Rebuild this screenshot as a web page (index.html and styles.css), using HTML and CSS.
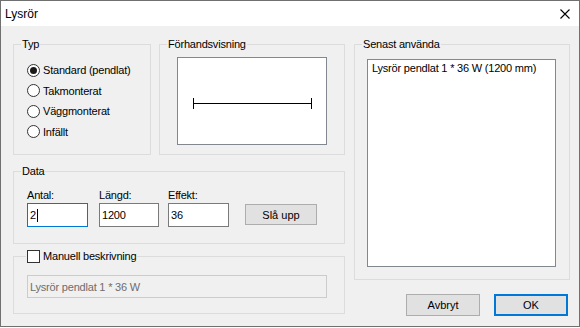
FILE: index.html
```html
<!DOCTYPE html>
<html lang="sv">
<head>
<meta charset="utf-8" />
<title>Lysrör</title>
<link rel="stylesheet" href="styles.css">
</head>
<body>
<div class="window">
  <div class="titlebar">
    <span class="title">Lysrör</span>
    <svg class="close" width="10" height="10" viewBox="0 0 10 10">
      <path d="M0.5 0.5 L9.5 9.5 M9.5 0.5 L0.5 9.5" stroke="#000" stroke-width="1.1" fill="none"/>
    </svg>
  </div>
  <div class="content">
    <div class="left">
      <div class="top-row">
        <fieldset class="group typ">
          <legend>Typ</legend>
          <div class="group-body">
            <div class="radio checked"><span class="circle"></span>Standard (pendlat)</div>
            <div class="radio"><span class="circle"></span>Takmonterat</div>
            <div class="radio"><span class="circle"></span>Väggmonterat</div>
            <div class="radio"><span class="circle"></span>Infällt</div>
          </div>
        </fieldset>
        <fieldset class="group preview-group">
          <legend>Förhandsvisning</legend>
          <div class="group-body">
            <div class="preview">
              <svg width="148" height="86" viewBox="0 0 148 86">
                <path d="M15 45.5 H134 M15.5 40 V51 M133.5 40 V51" stroke="#000" stroke-width="1" fill="none"/>
              </svg>
            </div>
          </div>
        </fieldset>
      </div>
      <fieldset class="group data">
        <legend>Data</legend>
        <div class="group-body data-row">
          <div class="field-col antal">
            <span class="field-label">Antal:</span>
            <div class="field focused">2<span class="caret"></span></div>
          </div>
          <div class="field-col langd">
            <span class="field-label">Längd:</span>
            <div class="field">1200</div>
          </div>
          <div class="field-col effekt">
            <span class="field-label">Effekt:</span>
            <div class="field">36</div>
          </div>
          <button class="btn lookup">Slå upp</button>
        </div>
      </fieldset>
      <fieldset class="group manual">
        <legend><span class="check"></span>Manuell beskrivning</legend>
        <div class="group-body">
          <div class="field disabled">Lysrör pendlat 1 * 36 W</div>
        </div>
      </fieldset>
    </div>
    <div class="right">
      <fieldset class="group recent">
        <legend>Senast använda</legend>
        <div class="group-body">
          <div class="listbox">
            <div class="item">Lysrör pendlat 1 * 36 W (1200 mm)</div>
          </div>
        </div>
      </fieldset>
      <div class="buttons">
        <button class="btn">Avbryt</button>
        <button class="btn default">OK</button>
      </div>
    </div>
  </div>
</div>
</body>
</html>
```

FILE: styles.css
```css
body {
  margin:0; background:#fff; color:#000;
  font-family:"Liberation Sans",Arial,sans-serif; font-size:11px; letter-spacing:-0.2px;
}
.window {
  width:580px; height:327px; box-sizing:border-box;
  border:1px solid #707070; background:#f0f0f0;
  display:flex; flex-direction:column;
}
.titlebar {
  height:25px; flex:none; background:#fff;
  display:flex; align-items:center; justify-content:space-between;
  padding:0 9px 0 4px; font-size:12px; letter-spacing:0;
}
.close { display:block; }

.content { display:flex; gap:9px; padding:11px 0 0 12px; }
.left { width:332px; display:flex; flex-direction:column; }
.right { width:216px; display:flex; flex-direction:column; }
.top-row { display:flex; gap:8px; }

.group {
  margin:0; padding:0; min-width:0; box-sizing:border-box;
  border:1px solid #dcdcdc;
}
.group legend { padding:0 1px; margin-left:7px; line-height:15px; }

/* Typ */
.typ { width:138px; height:118px; }
.typ .group-body { padding:8px 0 0 13px; }
.radio { display:flex; align-items:center; height:20.5px; white-space:nowrap; }
.circle {
  width:13px; height:13px; box-sizing:border-box; flex:none;
  border:1px solid #333; border-radius:50%; background:#fff;
  margin-right:3px;
  display:flex; align-items:center; justify-content:center;
}
.radio.checked .circle::after {
  content:""; width:7px; height:7px; border-radius:50%; background:#1a1a1a;
}

/* Förhandsvisning */
.preview-group { width:186px; height:118px; }
.preview-group .group-body { padding:5px 0 0 17px; }
.preview {
  width:150px; height:88px; box-sizing:border-box;
  border:1px solid #828790; background:#fff;
}
.preview svg { display:block; }

/* Data */
.data { height:80px; margin-top:9px; }
.data-row { display:flex; align-items:flex-end; padding:9px 0 0 13px; }
.field-col { display:flex; flex-direction:column; }
.field-label { line-height:15px; }
.antal { width:61px; margin-right:11px; }
.langd { width:60px; margin-right:9px; }
.effekt { width:61px; margin-right:16px; }
.field {
  height:24px; box-sizing:border-box;
  border:1px solid #7a7a7a; background:#fff;
  padding:0 2px; line-height:22px; white-space:nowrap;
  display:flex; align-items:center;
}
.field.focused { border-color:#0078d7; }
.caret { width:1px; height:13px; background:#000; margin-left:1px; }

.btn {
  font:inherit; color:#000; padding:0; margin:0;
  height:22px; width:74px; box-sizing:border-box;
  background:#e1e1e1; border:1px solid #adadad;
}
.btn.default { border:2px solid #0078d7; }
.lookup { width:72px; height:21px; margin-bottom:2px; }

/* Manuell beskrivning */
.manual { height:65px; margin-top:5px; }
.manual legend { margin-left:12px; display:flex; align-items:center; }
.manual .group-body { padding:11px 0 0 13px; }
.check {
  width:13px; height:13px; box-sizing:border-box;
  border:1px solid #333; background:#fff; margin-right:3px;
}
.field.disabled {
  width:300px; height:23px;
  background:#f0f0f0; border-color:#cccccc; color:#6d6d6d;
}

/* Senast använda */
.recent { height:243px; }
.recent .group-body { padding:7px 0 0 12px; }
.listbox {
  width:189px; height:208px; box-sizing:border-box;
  border:1px solid #828790; background:#fff;
  padding:1px 4px;
}
.item { line-height:15px; white-space:nowrap; }

.buttons { display:flex; justify-content:flex-end; gap:14px; margin-top:14px; padding-right:2px; }
```
